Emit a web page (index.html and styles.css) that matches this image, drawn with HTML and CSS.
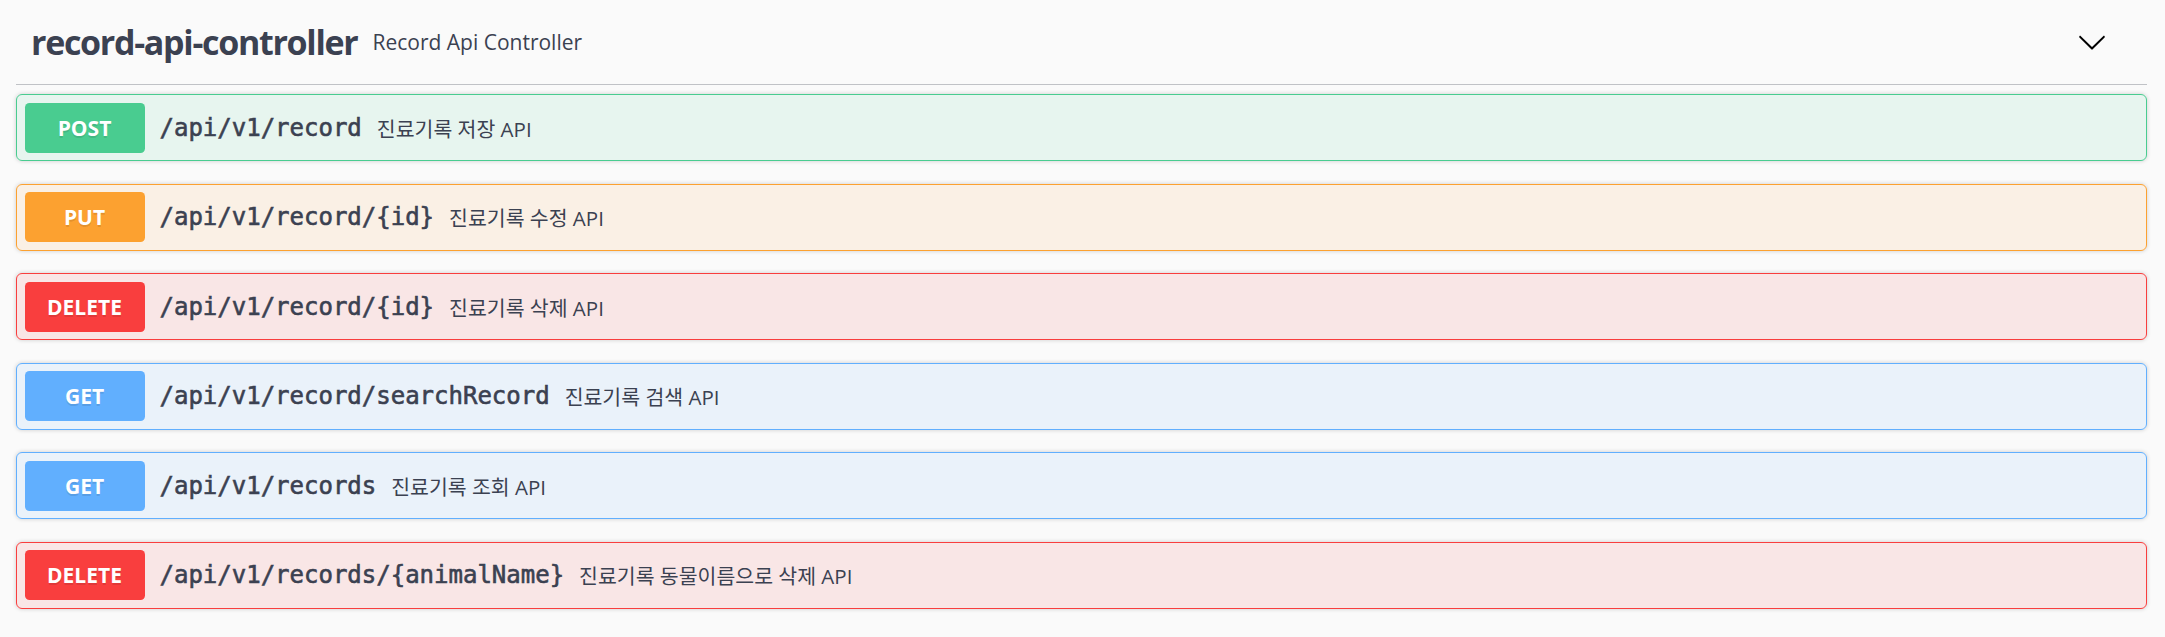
FILE: index.html
```html
<!DOCTYPE html>
<html lang="ko">
<head>
<meta charset="utf-8">
<title>record-api-controller</title>
<link rel="stylesheet" href="styles.css">
</head>
<body>
<div class="page">
  <section class="tag-section">
    <h3 class="tag-header">
      <a class="tag-name"><span>record-api-controller</span></a>
      <small class="tag-desc">Record Api Controller</small>
      <button class="expand" type="button" aria-label="collapse">
        <svg class="arrow" width="30" height="30" viewBox="0 0 20 20" aria-hidden="true">
          <path d="M17.418 6.109c.272-.268.709-.268.979 0s.271.701 0 .969l-7.908 7.83c-.27.268-.707.268-.979 0l-7.908-7.83c-.27-.268-.27-.701 0-.969.271-.268.709-.268.979 0L10 13.25l7.418-7.141z"/>
        </svg>
      </button>
    </h3>
    <div class="ops">
      <div class="op op-post">
        <div class="summary"><span class="method">POST</span><span class="path">/api/v1/record</span><span class="desc">진료기록 저장 API</span></div>
      </div>
      <div class="op op-put">
        <div class="summary"><span class="method">PUT</span><span class="path">/api/v1/record/{id}</span><span class="desc">진료기록 수정 API</span></div>
      </div>
      <div class="op op-delete">
        <div class="summary"><span class="method">DELETE</span><span class="path">/api/v1/record/{id}</span><span class="desc">진료기록 삭제 API</span></div>
      </div>
      <div class="op op-get">
        <div class="summary"><span class="method">GET</span><span class="path">/api/v1/record/searchRecord</span><span class="desc">진료기록 검색 API</span></div>
      </div>
      <div class="op op-get">
        <div class="summary"><span class="method">GET</span><span class="path">/api/v1/records</span><span class="desc">진료기록 조회 API</span></div>
      </div>
      <div class="op op-delete">
        <div class="summary"><span class="method">DELETE</span><span class="path">/api/v1/records/{animalName}</span><span class="desc">진료기록 동물이름으로 삭제 API</span></div>
      </div>
    </div>
  </section>
</div>
</body>
</html>
```
FILE: styles.css
```css
html, body {
  margin: 0;
  padding: 0;
  background: #fafafa;
}

.page {
  padding: 0 18px 0 16px;
  font-family: "Open Sans", "Noto Sans", "Noto Sans CJK KR", sans-serif;
  color: #3b4151;
}

.tag-header {
  display: flex;
  align-items: center;
  margin: 0 0 9px;
  padding: 15px 30px 15px 15px;
  border-bottom: 1px solid rgba(59, 65, 81, 0.3);
  font-family: "Open Sans", "Noto Sans", sans-serif;
  font-size: 34px;
  font-weight: 700;
  letter-spacing: -1.3px;
  line-height: 54px;
  color: #3b4151;
}

.tag-name {
  color: inherit;
  text-decoration: none;
}

.tag-desc {
  flex: 2;
  padding: 0 15px;
  font-family: "Open Sans", "Noto Sans", sans-serif;
  font-size: 21px;
  font-weight: 400;
  letter-spacing: 0;
  line-height: 30px;
}

.expand {
  display: flex;
  align-items: center;
  border: none;
  background: none;
  padding: 0 10px 0 0;
  margin: 0;
  cursor: pointer;
}

.arrow {
  display: block;
  fill: #000;
}

.op {
  border: 1px solid;
  border-radius: 6px;
  box-shadow: 0 0 4.5px rgba(0, 0, 0, 0.19);
  margin-bottom: 22.5px;
}

.summary {
  display: flex;
  align-items: center;
  padding: 7.5px;
}

.method {
  flex: none;
  min-width: 120px;
  padding: 9px 0;
  line-height: 32px;
  border-radius: 4.5px;
  font-family: "Open Sans", "Noto Sans", sans-serif;
  font-size: 21px;
  font-weight: 700;
  text-align: center;
  color: #fff;
  text-shadow: 0 1.5px 0 rgba(0, 0, 0, 0.1);
}

.path {
  flex: none;
  padding: 0 15px;
  font-family: "DejaVu Sans Mono", monospace;
  font-size: 24px;
  font-weight: 400;
  -webkit-text-stroke: 0.6px #3b4151;
  color: #3b4151;
}

.desc {
  flex: 1 1 auto;
  font-family: "Open Sans", "Noto Sans CJK KR", sans-serif;
  font-size: 20.5px;
  color: #3b4151;
}

.op-post { border-color: #49cc90; background: rgba(73, 204, 144, 0.1); }
.op-post .method { background: #49cc90; }

.op-put { border-color: #fca130; background: rgba(252, 161, 48, 0.1); }
.op-put .method { background: #fca130; }

.op-delete { border-color: #f93e3e; background: rgba(249, 62, 62, 0.1); }
.op-delete .method { background: #f93e3e; }

.op-get { border-color: #61affe; background: rgba(97, 175, 254, 0.1); }
.op-get .method { background: #61affe; }
```
